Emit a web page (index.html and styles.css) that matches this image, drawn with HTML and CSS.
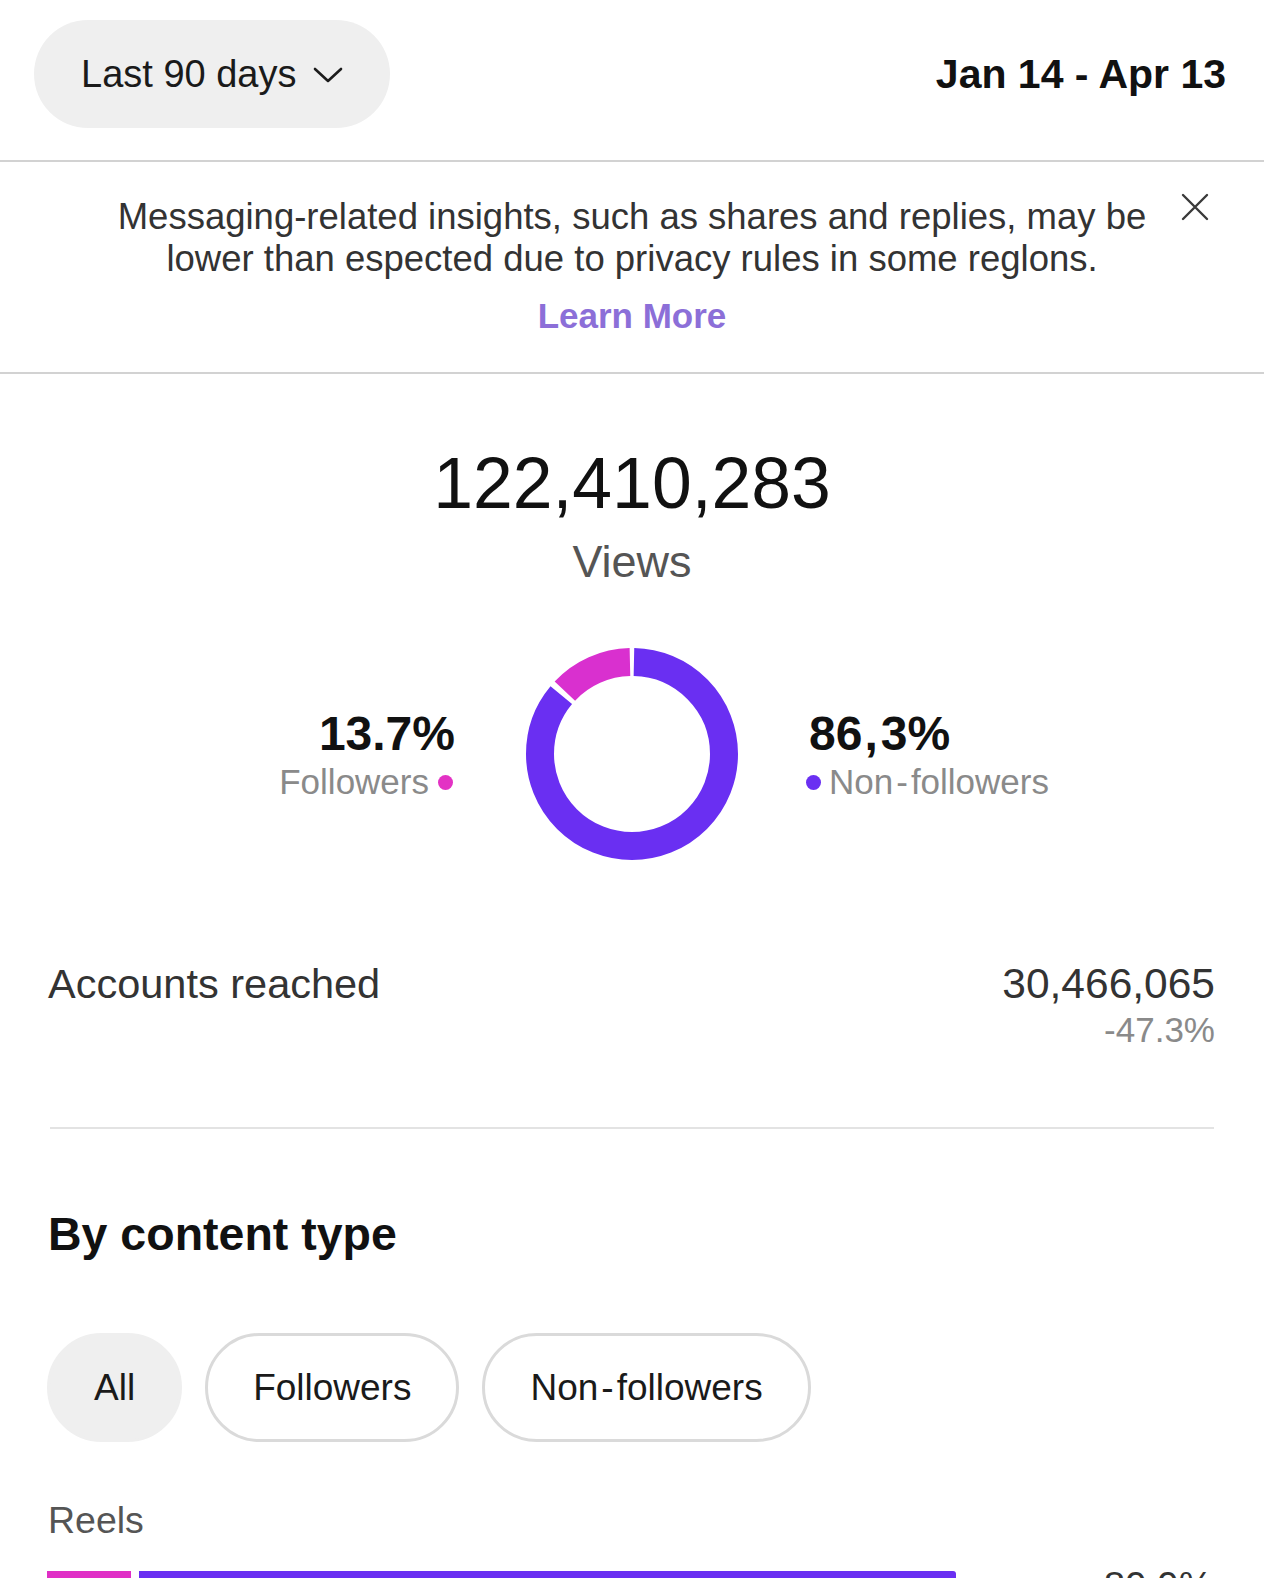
FILE: index.html
```html
<!DOCTYPE html>
<html lang="en">
<head>
<meta charset="utf-8">
<title>Insights</title>
<link rel="stylesheet" href="styles.css">
</head>
<body>
<header class="topbar">
  <button class="range-pill">
    <span>Last 90 days</span>
    <svg class="chev" width="30" height="16" viewBox="0 0 30 16"><path d="M2 2 L15 14 L28 2" fill="none" stroke="#1c1c1c" stroke-width="2.6" stroke-linecap="round" stroke-linejoin="round"/></svg>
  </button>
  <div class="date-range">Jan 14 - Apr 13</div>
</header>

<section class="notice">
  <p class="notice-text">Messaging-related insights, such as shares and replies, may be lower than espected due to privacy rules in some reglons.</p>
  <a class="learn-more" href="#">Learn More</a>
  <svg class="close" width="28" height="28" viewBox="0 0 28 28"><path d="M2 2 L26 26 M26 2 L2 26" fill="none" stroke="#3a3a3a" stroke-width="2.4" stroke-linecap="round"/></svg>
</section>

<section class="views">
  <div class="views-total">122,410,283</div>
  <div class="views-label">Views</div>
  <div class="split">
    <div class="split-side left">
      <div class="split-pct">13.7%</div>
      <div class="split-name">Followers<span class="dot pink"></span></div>
    </div>
    <svg class="donut" width="212" height="212" viewBox="0 0 212 212">
      <g transform="rotate(-90 106 106)">
        <circle cx="106" cy="106" r="92" fill="none" stroke="#6a2ff2" stroke-width="28" stroke-dasharray="494.6 600" stroke-dashoffset="-2"/>
        <circle cx="106" cy="106" r="92" fill="none" stroke="#d930cf" stroke-width="28" stroke-dasharray="73 600" stroke-dashoffset="-502"/>
      </g>
    </svg>
    <div class="split-side right">
      <div class="split-pct">86<span class="wide-comma">,</span>3%</div>
      <div class="split-name"><span class="dot purple"></span>Non<span class="hy">-</span>followers</div>
    </div>
  </div>
</section>

<section class="metric">
  <div class="metric-name">Accounts reached</div>
  <div class="metric-values">
    <div class="metric-num">30,466,065</div>
    <div class="metric-delta">-47.3%</div>
  </div>
</section>
<hr class="divider">

<section class="content-type">
  <h2 class="section-title">By content type</h2>
  <div class="filters">
    <button class="filter active">All</button>
    <button class="filter">Followers</button>
    <button class="filter">Non<span class="hy">-</span>followers</button>
  </div>
  <div class="type-label">Reels</div>
  <div class="type-row">
    <div class="bar">
      <div class="seg pink-seg" style="width:84px"></div>
      <div class="seg purple-seg" style="width:817px"></div>
    </div>
    <div class="type-pct">89.9%</div>
  </div>
</section>
</body>
</html>
```

FILE: styles.css
```css
* { box-sizing: border-box; }
html, body { margin: 0; padding: 0; background: #fff; }
body {
  font-family: "Liberation Sans", Arial, sans-serif;
  color: #1a1a1a;
  width: 1264px;
  overflow: hidden;
}

.topbar {
  height: 162px;
  display: flex;
  align-items: flex-start;
  justify-content: space-between;
  padding: 20px 38px 0 34px;
  border-bottom: 2px solid #d2d2d2;
}
.range-pill {
  height: 108px;
  padding: 0 47px 0 47px;
  border: 0;
  border-radius: 999px;
  background: #efefef;
  display: flex;
  align-items: center;
  gap: 17px;
  font-family: inherit;
  font-size: 38px;
  color: #1a1a1a;
}
.chev { margin-top: 2px; }
.date-range {
  margin-top: 31px;
  font-size: 41px;
  font-weight: 700;
  color: #111;
}

.notice {
  position: relative;
  padding: 34px 0 36px;
  text-align: center;
  border-bottom: 2px solid #d2d2d2;
}
.notice-text {
  margin: 0 auto;
  width: 1080px;
  font-size: 36.5px;
  line-height: 42px;
  color: #333;
}
.learn-more {
  display: inline-block;
  margin-top: 15px;
  font-size: 35px;
  line-height: 41px;
  font-weight: 700;
  color: #8c6fd8;
  text-decoration: none;
}
.close {
  position: absolute;
  top: 31px;
  right: 55px;
}

.views {
  padding-top: 67px;
  text-align: center;
}
.views-total {
  font-size: 71.5px;
  line-height: 84px;
  color: #111;
}
.views-label {
  margin-top: 9px;
  font-size: 45px;
  line-height: 56px;
  color: #555;
}
.split {
  margin-top: 58px;
  display: grid;
  grid-template-columns: 1fr auto 1fr;
  column-gap: 71px;
  align-items: center;
}
.split-side { padding-top: 4px; }
.split-side.left { text-align: right; }
.split-side.right { text-align: left; }
.split-pct {
  font-size: 48px;
  line-height: 52px;
  font-weight: 700;
  color: #111;
}
.wide-comma { margin: 0 3px 0 2px; }
.split-name {
  font-size: 35px;
  line-height: 44px;
  color: #8a8a8a;
  display: inline-flex;
  align-items: center;
}
.hy { margin: 0 3px; }
.left .split-name { margin-right: 2px; }
.right .split-name { margin-left: -3px; }
.dot {
  display: inline-block;
  width: 15px;
  height: 15px;
  border-radius: 50%;
}
.dot.pink { background: #e332c4; margin-left: 9px; }
.dot.purple { background: #6a2ff2; margin-right: 8px; }
.donut { display: block; }

.metric {
  margin-top: 100px;
  display: flex;
  justify-content: space-between;
  align-items: flex-start;
  padding: 0 49px 0 48px;
}
.metric-name {
  font-size: 41.5px;
  line-height: 48px;
  color: #333;
}
.metric-values { text-align: right; }
.metric-num {
  font-size: 42.5px;
  line-height: 48px;
  color: #333;
}
.metric-delta {
  font-size: 35px;
  line-height: 44px;
  color: #8a8a8a;
}
.divider {
  margin: 75px 50px 0 50px;
  border: 0;
  border-top: 2px solid #e3e3e3;
}

.content-type { padding: 0 51px 0 47px; }
.section-title {
  margin: 77px 0 0 1px;
  font-size: 46.5px;
  line-height: 56px;
  font-weight: 700;
  color: #111;
}
.filters {
  margin-top: 71px;
  display: flex;
  gap: 23px;
}
.filter {
  height: 109px;
  padding: 0 45px;
  border: 3px solid #dadada;
  border-radius: 999px;
  background: #fff;
  font-family: inherit;
  font-size: 37px;
  color: #1a1a1a;
}
.filter.active {
  background: #efefef;
  border-color: #efefef;
  padding: 0 44px;
}
.type-label {
  margin-top: 56px;
  margin-left: 1px;
  font-size: 37.5px;
  line-height: 44px;
  color: #555;
}
.type-row {
  margin-top: 8px;
  display: flex;
  align-items: flex-start;
  justify-content: space-between;
}
.bar {
  margin-top: 21px;
  display: flex;
  gap: 8px;
}
.seg { height: 14px; }
.pink-seg { background: #e02fc6; }
.purple-seg { background: #6a2ff2; border-radius: 0 3px 3px 0; }
.type-pct {
  margin-top: 14px;
  font-size: 38.5px;
  line-height: 44px;
  color: #333;
}
```
